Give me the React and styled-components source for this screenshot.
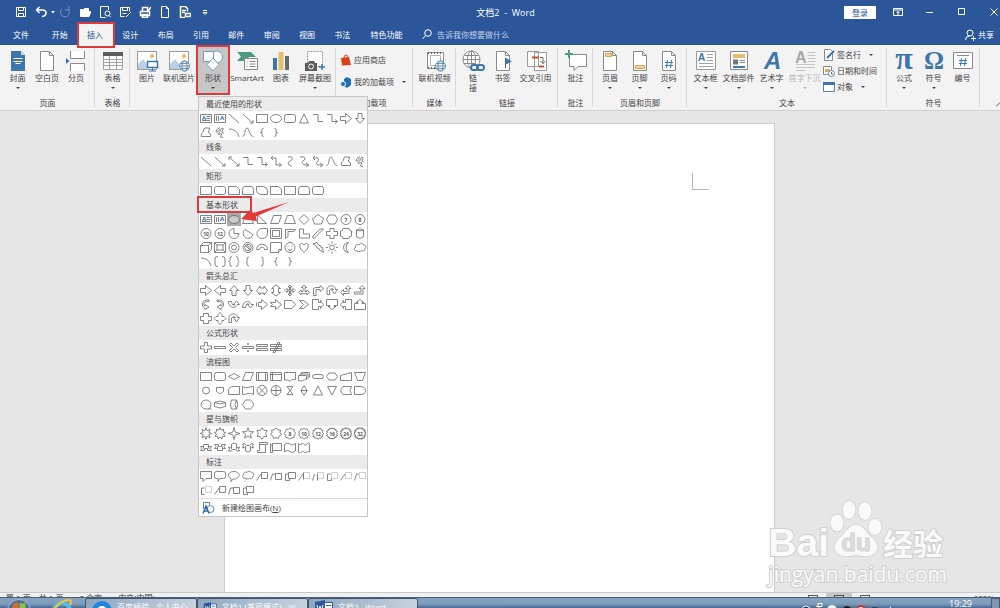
import React from 'react'
import styled, { createGlobalStyle, css } from 'styled-components'

const GlobalStyle = createGlobalStyle`
  * {
    box-sizing: border-box;
  }

  body {
    margin: 0;
    overflow: hidden;
    font-family: "Open Sans", "Noto Sans CJK SC", sans-serif;
    font-size: 8px;
    color: #444;
  }

  button, input {
    font: inherit;
    color: inherit;
    border: 0;
    padding: 0;
    margin: 0;
    background: none;
  }

  svg {
    display: block;
    fill: none;
  }
`

const Window = styled.div`
  height: 100vh;
  display: flex;
  flex-direction: column;
  overflow: hidden;
  background: #e6e6e6;
`

/* ---------- title bar ---------- */

const TitleBar = styled.header`
  display: grid;
  grid-template-columns: 1fr auto 1fr;
  align-items: center;
  height: 24px;
  padding-left: 11px;
  background: #2b579a;
  color: #fff;
`

const QuickAccess = styled.div`
  display: flex;
  align-items: center;
`

const QuickButton = styled.button`
  display: flex;
  justify-content: center;
  width: ${({ $narrow }) => ($narrow ? '4px' : '20px')};
  opacity: ${({ disabled }) => (disabled ? 0.35 : 1)};
`

const Title = styled.h1`
  margin: 0;
  font-size: 9px;
  font-weight: 400;
  white-space: pre;
`

const WindowControls = styled.div`
  display: flex;
  justify-content: flex-end;
  align-items: center;
  margin-right: -10px;
`

const LoginButton = styled.button`
  width: 32px;
  height: 13px;
  line-height: 13px;
  margin-right: 6px;
  background: #fff;
  color: #2b579a;
`

const ControlButton = styled.button`
  display: flex;
  justify-content: center;
  width: 32px;
`

/* ---------- tabs ---------- */

const TabBar = styled.nav`
  display: flex;
  align-items: stretch;
  height: 21px;
  background: #2b579a;
  color: #fff;
`

const TabGroup = styled.div`
  display: grid;
  grid-template-columns: repeat(9, 1fr);
  width: 318px;
`

const Tab = styled.button`
  position: relative;
  width: ${({ $width }) => $width || 'auto'};
  color: ${({ $active }) => ($active ? '#2b579a' : '#fff')};
  background: ${({ $active }) => ($active ? '#f3f3f3' : 'none')};
`

const RedFrame = styled.span`
  position: absolute;
  inset: ${({ $inset }) => $inset || '0'};
  border: 2px solid #dd3a3f;
  pointer-events: none;
  z-index: 6;
`

const TellMe = styled.label`
  display: flex;
  align-items: center;
  gap: 5px;
  margin-left: 9px;
`

const TellMeInput = styled.input`
  width: 90px;
  outline: 0;

  &::placeholder {
    color: #c5d3ea;
    opacity: 1;
  }
`

const Share = styled.button`
  display: flex;
  align-items: center;
  gap: 2px;
  margin-left: auto;
  padding-right: 6px;
`

/* ---------- ribbon ---------- */

const Ribbon = styled.section`
  display: flex;
  height: 66px;
  padding-top: 1px;
  background: #f3f3f3;
  border-bottom: 1px solid #cfcfcf;
`

const Group = styled.div`
  position: relative;
  display: flex;
  flex-direction: column;
  justify-content: space-between;
  flex: none;
  width: ${({ $width }) => $width}px;

  &::after {
    content: '';
    position: absolute;
    right: 0;
    top: 2px;
    bottom: 3px;
    width: 1px;
    background: #d8d8d8;
  }
`

const GroupItems = styled.div`
  display: flex;
  justify-content: ${({ $start }) => ($start ? 'flex-start' : 'center')};
  padding-left: ${({ $start }) => ($start ? '2px' : '0')};
`

const GroupLabel = styled.div`
  height: 14px;
  line-height: 14px;
  text-align: center;
`

const ItemWrap = styled.div`
  position: relative;
  flex: none;
  width: ${({ $width }) => $width}px;
`

const ItemButton = styled.button`
  display: flex;
  flex-direction: column;
  align-items: center;
  width: 100%;
  height: 49px;
  padding-top: 4px;
  white-space: pre;
  line-height: 10px;
  background: ${({ $pressed }) => ($pressed ? '#c6c6c6' : 'none')};
  color: ${({ disabled }) => (disabled ? '#b5b5b5' : '#444')};

  svg {
    flex: none;
    margin-bottom: 1px;
    overflow: visible;
  }
`

const Caret = styled.span`
  flex: none;
  width: 0;
  height: 0;
  margin: ${({ $inline }) => ($inline ? '0 0 0 6px' : '4px 0 0')};
  border: 2px solid transparent;
  border-top-color: currentColor;
  border-bottom: 0;
`

const SmallStack = styled.div`
  display: flex;
  flex-direction: column;
  gap: ${({ $gap }) => $gap}px;
  padding: ${({ $top }) => $top}px 0 0 2px;
`

const SmallButton = styled.button`
  display: flex;
  align-items: center;
  gap: 2px;
  height: 12px;
  line-height: 12px;
  white-space: nowrap;
`

const Collapse = styled.button`
  margin: auto 0 2px auto;
`

/* ---------- shapes menu ---------- */

const Menu = styled.div`
  position: absolute;
  top: 50px;
  left: 2px;
  width: 170px;
  background: #fff;
  border: 1px solid #c6c6c6;
  z-index: 5;
`

const MenuSection = styled.section`
  position: relative;
  padding-bottom: 1px;
`

const MenuHeading = styled.h2`
  position: relative;
  height: 14px;
  margin: 0;
  padding-left: 7px;
  line-height: 14px;
  font-size: 8px;
  font-weight: 400;
  background: #ebebeb;
`

const ShapeGrid = styled.div`
  display: grid;
  grid-template-columns: repeat(12, 1fr);
`

const ShapeCell = styled.button`
  display: flex;
  justify-content: center;
  height: 14px;
  ${({ $selected }) =>
    $selected &&
    css`
      background: #aaa;
    `}
`

const MenuFooter = styled.button`
  display: flex;
  align-items: center;
  gap: 7px;
  width: 100%;
  height: 18px;
  padding-left: 3px;
  border-top: 1px solid #dcdcdc;
`

const ArrowMark = styled.svg`
  position: absolute;
  left: 42px;
  top: 3px;
  pointer-events: none;
`

/* ---------- document ---------- */

const Workspace = styled.main`
  position: relative;
  flex: 1;
  min-height: 0;
  padding: 12px 225px 0 224px;
`

const Page = styled.article`
  height: 100%;
  background: #fff;
  border: 1px solid #cfcfcf;
  border-bottom: 0;
  padding: 49px 65px;
`

const MarginCorner = styled.div`
  width: 17px;
  height: 17px;
  margin-left: auto;
  border-left: 1px solid #b5b5b5;
  border-bottom: 1px solid #b5b5b5;
`

const Watermark = styled.div`
  position: absolute;
  right: 53px;
  bottom: 5px;
  color: #fafafa;
  -webkit-text-stroke: 2px #d0d0d0;
  paint-order: stroke fill;
`

const WatermarkLogo = styled.div`
  display: flex;
  align-items: flex-end;
  height: 58px;
  font: 700 39px/36px "Liberation Sans", sans-serif;

  svg {
    margin: 0 0 3px;
  }
`

const Du = styled.text`
  font: 700 24px "Liberation Sans", sans-serif;
  fill: #dcdcdc;
  stroke: #c8c8c8;
  stroke-width: 1px;
  -webkit-text-stroke: 0;
`

const WatermarkCjk = styled.span`
  font: 700 30px/38px "Noto Sans CJK SC", sans-serif;
`

const WatermarkUrl = styled.div`
  font: 400 21px/26px "Open Sans", sans-serif;
`

/* ---------- status bar and taskbar ---------- */

const StatusBar = styled.footer`
  display: flex;
  justify-content: space-between;
  flex: none;
  height: 5px;
  overflow: hidden;
  padding: 0 6px;
  line-height: 10px;
  white-space: pre;
  background: #f1f1f1;
  border-top: 1px solid #c8c8c8;
  color: #333;
`

const StatusSide = styled.div`
  display: flex;
  gap: ${({ $gap }) => $gap}px;
`

const ViewButton = styled.button`
  width: 26px;
  height: 12px;
  background: ${({ $active }) => ($active ? '#c6c6c6' : 'none')};

  &::before {
    content: '';
    display: block;
    width: 8px;
    height: 9px;
    margin: 2px auto 0;
    border: 1px solid #555;
  }
`

const Zoom = styled.span`
  margin-left: 96px;
`

const Taskbar = styled.footer`
  display: flex;
  flex: none;
  height: 11px;
  overflow: hidden;
  border-top: 1px solid #4b5f7a;
  background: linear-gradient(#88a2c0, #7c9aba 60%, #47698f);
  color: #fff;
`

const TaskLauncher = styled.button`
  display: flex;
  justify-content: center;
  width: ${({ $width }) => $width}px;
`

const TaskButton = styled.button`
  display: flex;
  flex: none;
  gap: 4px;
  width: ${({ $width }) => $width}px;
  height: 30px;
  padding: 1px 5px;
  overflow: hidden;
  line-height: 14px;
  white-space: nowrap;
  border: 1px solid #41566f;
  border-radius: 2px;
  background: linear-gradient(100deg, #8fa6bf, #c9d4e0);
`

const Tray = styled.div`
  display: flex;
  gap: 7px;
  margin-left: auto;
  padding-top: 2px;
`

const Clock = styled.time`
  margin: -2px 12px 0 16px;
  font-size: 9px;
  line-height: 12px;
`

const ShowDesktop = styled.button`
  width: 9px;
  height: 20px;
  margin-top: -2px;
  border: 1px solid #405a78;
  background: #8095ad;
`

/* ---------- shape drawings, all on a 14 x 14 grid ---------- */

const star = (n, outer, inner) => {
  const points = []
  for (let i = 0; i < n * 2; i++) {
    const r = i % 2 ? inner : outer
    const a = (Math.PI * i) / n - Math.PI / 2
    points.push(`${(7 + r * Math.cos(a)).toFixed(1)} ${(7.5 + r * Math.sin(a)).toFixed(1)}`)
  }
  return `M${points.join('L')}z`
}

const circle = (r, x = 7, y = 7.5) => `M${x - r} ${y}a${r} ${r} 0 1 0 ${2 * r} 0a${r} ${r} 0 1 0 ${-2 * r} 0z`

const RECT = 'M1.5 3.5h11v8h-11z'

const shapes = {
  textH: 'M1.5 3.5h11v8h-11zM7.5 5.5h4M7.5 7.5h4M3 9.5h8',
  textV: 'M1.5 3.5h11v8h-11zM3.5 5v5M5.5 5v5',
  line: 'M2 3l10 9',
  arrow: 'M2 3l9.5 9M12 9v3H9',
  arrow2: 'M2.5 3.5l9 8M12 9v3H9M2 6V3h3',
  rect: RECT,
  ellipse: 'M1.5 7.5a5.5 4 0 1 0 11 0a5.5 4 0 1 0 -11 0z',
  ellipseOn: 'M1.5 7.5a5.5 4 0 1 0 11 0a5.5 4 0 1 0 -11 0z',
  round: 'M3.5 3.5h7q2 0 2 2v4q0 2-2 2h-7q-2 0-2-2v-4q0-2 2-2z',
  triangle: 'M7 3l4.5 9h-9z',
  elbow: 'M2 3.5h5v7h5',
  elbowArrow: 'M2 3.5h5v7h5M10 8.5l2.5 2-2.5 2',
  elbowArrow2: 'M3 4h4v7h5M10 9l2.5 2-2.5 2M4 2l-2 2 2 2',
  curve: 'M5 3c6-1 5 3 2 4s-2 5 2 5',
  curveArrow: 'M3 3c7-1 5 3 3 4s-1 4 5 4M9 9l3 2-3 2',
  curveArrow2: 'M3 4c6-1 5 2 3 4s0 3 5 3M9 9l3 2-3 2M4 2L2 4l2 2',
  wave: 'M1.500 11.500C4.500 11.500 3.500 3 6 3s2 8.500 6.500 8.500',
  freeform: 'M2.500 11.500h9q1-3-1.500-3.500-1.500-1 0-2.500l.5-2.500H5.500L4.500 5q1 1.500-1 2.500t-1 4z',
  scribble: 'M7 2.500q-4 2-4 4t4-2q2 0-1 3t2 1q2 0 0 2t2 2M8 3.500q3-1 2 1T9 7t2 1',
  arc: 'M2 4c5 0 9 3 10 8',
  braceL: 'M8.500 3.500q-2 0-1.500 2t-1.500 2q2 0 1.500 2t1.500 2',
  braceR: 'M5.500 3.500q2 0 1.500 2t1.500 2q-2 0-1.500 2t-1.500 2',
  arrowR: 'M1.500 5.500h5v-3l6 5-6 5v-3h-5z',
  arrowL: 'M12.500 5.500h-5v-3l-6 5 6 5v-3h5z',
  arrowU: 'M5 12.500v-5H2.500L7 2.500l4.500 5H9v5z',
  arrowD: 'M5 2.500v5H2.500L7 12.500l4.500-5H9v-5z',
  snip1: 'M1.500 3.500h8l3 3v5h-11z',
  snipDiag: 'M1.500 3.500h7q4 1 4 4v4h-7q-4-1-4-4z',
  round2: 'M4 3.500h6q2.500 0 2.500 3v5h-11v-5q0-3 2.500-3z',
  parallelogram: 'M4.500 3.500h8l-3 8h-8z',
  trapezoid: 'M4.500 3.500h5l3 8h-11z',
  rtTriangle: 'M2.500 3v8.500h9z',
  diamond: 'M7 2.500l5 5-5 5-5-5z',
  pentagon: 'M7 2.500l5.500 4-2 5.500h-7l-2-5.500z',
  hexagon: 'M4 3h6l2.500 4.500L10 12H4L1.500 7.500z',
  circle: circle(5),
  pie: 'M7 2.500a5 5 0 1 0 5 5H7z',
  chord: 'M4 3.500a5 5 0 1 0 8 5z',
  tear: 'M12.500 2.500v5a5.300 5 0 1 1-5.300-5z',
  frame: 'M1.500 2.500h11v10h-11zM3.500 4.500h7v6h-7z',
  halfFrame: 'M2.500 3.500h10l-1.500 2H5v5l-2.500 2z',
  lShape: 'M2.500 3h4v5h6v4h-10z',
  stripe: 'M2 12V10l7-7h3.500L3.500 12z',
  plus: 'M5 2.500h4v3h3.500v4H9v3H5v-3H1.500v-4H5z',
  plaque: 'M4 2.500h6q0 2.500 2.500 2.500v5q-2.500 0-2.500 2.500H4q0-2.500-2.500-2.500V5q2.500 0 2.500-2.500z',
  can: 'M3.500 4v7q3.500 2.500 7 0V4q-3.500-2.500-7 0 3.500 2 7 0',
  cube: 'M1.500 5.500h8v7h-8zM1.500 5.500l3-3h8v7l-3 3M9.500 5.500l3-3',
  bevel: 'M1.500 2.500h11v10h-11zM4 5h6v5H4zM1.500 2.500L4 5M12.500 2.500L10 5M1.500 12.500L4 10M12.500 12.500L10 10',
  donut: circle(5) + circle(2.5),
  noSign: circle(5) + circle(3.2) + 'M4.500 5.500l4.500 4.500M5.500 4.500l4 4.500',
  blockArc: 'M1.500 9.500c0-7 11-7 11 0h-3c0-3-5-3-5 0z',
  fold: 'M1.500 2.500h11v7l-3 3h-8zM9.500 12.500v-3h3',
  smiley: circle(5) + 'M4.500 9q2.500 3 5 0M5 5.500v1M9 5.500v1',
  heart: 'M7 12.500C-1 6 4 .5 7 5c3-4.500 8 1 0 7.500z',
  bolt: 'M2 4l4-1.500 2 3 1-.5 1.500 3 1-.5 1 5-4.500-3 .5-.5-3-1.500 .5-1z',
  sun: circle(2.3) + 'M7 1.500v2M7 11.500v2M1 7.500h2M11 7.500h2M3 3.500l1.500 1.500M9.500 10l1.500 1.500M11 3.500L9.500 5M4.500 10L3 11.500',
  moon: 'M9.500 2.500a5 5 0 1 0 0 10q-5-5 0-10z',
  cloud: 'M4 11c-3 0-3.500-3-1.500-3.500C2 4.500 5 4 6 5c1-2 4-2 4.500 0 3 0 2.500 3 1.500 3.500 0 3-3 2.500-3.500 2-1 1.500-3.500 1-4.500.5z',
  brackets: 'M5 2.500q-3 0-3 2v6q0 2 3 2M9 2.500q3 0 3 2v6q0 2-3 2',
  braces: 'M5 2.500q-2 0-2 2v2l-1 1 1 1v2q0 2 2 2M9 2.500q2 0 2 2v2l1 1-1 1v2q0 2-2 2',
  bracketL: 'M8 3q-2 0-2 2v5q0 2 2 2',
  bracketR: 'M6 3q2 0 2 2v5q0 2-2 2',
  arrowLR: 'M1.500 7.500l3.500-4.500v2h4v-2l3.500 4.500-3.500 4.500v-2H5v2z',
  arrowUD: 'M7 2l4.500 3.500h-2v4h2L7 13 2.500 9.500h2v-4h-2z',
  arrow4: 'M7 2l2 2H7.500v3H10V5.500l2 2-2 2V8H7.500v3H9l-2 2-2-2h1.500V8H4v1.500l-2-2 2-2V7h2.500V4H5z',
  arrow3: 'M7 2l2.500 2.500H8v4h2V7l2.500 2.500L10 12v-1.500H4V12L1.500 9.500 4 7v1.500h2v-4H4.500z',
  bent: 'M2.500 12.500v-6q0-2 2-2H9v-2L12.500 5.500 9 8.500v-2H5v6z',
  uTurn: 'M2 11.500V7c0-5.500 8.500-5.500 8.500-.5h2L9.500 11 6.500 6.500h2q-2-2.500-4 .5v4.500z',
  leftUp: 'M1.500 9.500l3-3V8.500H8V5.500H6l3-3 3 3h-2v5H4.500v2z',
  bentUp: 'M1.500 9H8V5.500H6l3-3 3 3h-2v5.500H1.500z',
  curvedR: 'M10 3C2 2 2 10 6 11v1.500l4-2.500-4-2.500V9C3.500 7 5 4 10 4.500z',
  curvedL: 'M4 3c8-1 8 7 4 8v1.500L4 10l4-2.500V9c2.500-2 1-5-4-4.500z',
  curvedU: 'M1.500 4.500c0 7 8 7.500 8.500 3h2.500L9.500 4 6.500 7.500H8Q5.500 10 4.500 4.500z',
  curvedD: 'M1.500 10.500c0-7 8-7.500 8.500-3h2.500L9.500 11 6.500 7.500H8Q5.500 5 4.500 10.500z',
  stripedR: 'M1.500 5.500v4M3.500 5.500h3v-3l6 5-6 5v-3h-3z',
  notchedR: 'M1.500 5.500h5v-3l6 5-6 5v-3h-5l2-2z',
  homePlate: 'M1.500 3.500h7.500l3.500 4-3.500 4H1.500z',
  chevron: 'M2.500 3.500h4l5 4-5 4h-4l4-4z',
  callR: 'M1.500 2.500h6v3h2v-2l3 4-3 4v-2h-2v3h-6z',
  callD: 'M1.500 2.500h11v6H9v1h2l-4 3-4-3h2v-1H1.500z',
  callL: 'M12.500 2.500h-6v3h-2v-2l-3 4 3 4v-2h2v3h6z',
  callU: 'M1.500 12.500h11v-6H9v-1h2l-4-3-4 3h2v1H1.500z',
  callLR: 'M4.500 2.500h5v3h3v4h-3v3h-5v-3h-3v-4h3z',
  call4: 'M7 1.500l2 2v2h2l2 2-2 2H9v2l-2 2-2-2v-2H3l-2-2 2-2h2v-2z',
  mPlus: 'M5.500 2.500h3v3.500h4v3h-4v3.500h-3V9h-4V6h4z',
  minus: 'M1.500 6.500h11v2h-11z',
  times: 'M4 3l3 3 3-3 1.500 1.500L8.500 7.500l3 3L10 12 7 9l-3 3-1.500-1.500 3-3-3-3z',
  divide: 'M1.500 6.500h11v2h-11zM6.500 3.500h1v1h-1zM6.500 10.500h1v1h-1z',
  equal: 'M1.500 4.500h11v2h-11zM1.500 8.500h11v2h-11z',
  notEqual: 'M1.500 4.500h11v2h-11zM1.500 8.500h11v2h-11zM4 12.500l5-10h2l-5 10z',
  decision: 'M7 4.500l5.500 3-5.500 3-5.500-3z',
  predefined: 'M1.500 3.500h11v8h-11zM3.500 3.500v8M10.500 3.500v8',
  internal: 'M1.500 3.500h11v8h-11zM3.500 3.500v8M1.500 5.500h11',
  doc: 'M1.500 3.500h11v7H9l-2 2-2-1.500H1.500z',
  multiDoc: 'M1.500 6.500h8v4q-2 0-4 1t-4 0zM3 6.500v-1.500h8v5M4.500 5v-1.500h8v5',
  terminator: 'M4 5.500h6q2.500 0 2.500 2t-2.500 2H4q-2.500 0-2.500-2t2.500-2z',
  prep: 'M4 4h6l2.500 3.500L10 11H4L1.500 7.500z',
  manualIn: 'M1.500 6.500l11-3v8h-11z',
  manualOp: 'M1.500 3.500h11l-3 8h-5z',
  connector: circle(3.5),
  offpage: 'M3.500 4.500h7v4l-3.500 2.500-3.500-2.500z',
  card: 'M4.500 3.500h8v8h-11V6z',
  tape: 'M1.500 3.500q3 2 5.500 1t5.500-1v8q-3-2-5.500-1t-5.500 1z',
  sumJ: circle(5) + 'M3.500 4l7 7M10.500 4l-7 7',
  orJ: circle(5) + 'M7 2.500v10M2 7.500h10',
  collate: 'M4 3.500h6l-6 8h6z',
  sort: 'M7 2.500l3 5-3 5-3-5zM4 7.500h6',
  merge: 'M7 12L2.500 3.500h9z',
  stored: 'M4 3.500h8.500q-3 4 0 8H4q-4.500-4 0-8z',
  delay: 'M1.500 3.500H7q5.500 0 5.500 4T7 11.500H1.500z',
  seqTape: 'M7 12h5.500M7 12a5 4.500 0 1 1 5-4.500q0 3-2.500 4.500',
  disk: 'M1.500 5.500v4q5.500 3 11 0v-4q-5.500-3-11 0 5.500 3 11 0',
  drum: 'M4.500 3q-2.500 4.500 0 9h5q2.500-4.500 0-9zM9.500 3q-3 4.500 0 9',
  display: 'M1.500 7.500l3-4.500h5q3 2 3 4.500t-3 4.500h-5z',
  burst1: star(8, 5.8, 3),
  burst2: star(9, 5.8, 3.6),
  star4: star(4, 6, 1.8),
  star5: star(5, 5.8, 2.4),
  star6: star(6, 5.8, 3.6),
  star7: star(7, 5.6, 4),
  star8: star(8, 5.6, 4.8),
  star10: star(10, 5.6, 4.6),
  star12: star(12, 5.8, 4.6),
  star16: star(16, 5.8, 4.6),
  star24: star(20, 5.9, 4.7),
  star32: star(24, 6, 4.8),
  ribbonU: 'M1.500 10.500l1.500-2-1.500-2h3v-2h5v2h3l-1.500 2 1.500 2h-4v-2h-3v2zM4.500 6.500v2M9.500 6.500v2',
  ribbonD: 'M1.500 4.500h4v2h3v-2h4l-1.500 2 1.500 2h-3v2h-5v-2h-3l1.500-2zM4.500 6.500v2M9.500 6.500v2',
  curvRibU: 'M1.500 11l1-2-1-2q2 1 3 0V4q2.500-2 5 0v3q1 1 3 0l-1 2 1 2q-3 1-4-1.500h-3Q4.500 12 1.500 11zM4.500 7v2M9.500 7v2',
  curvRibD: 'M1.500 4l1 2-1 2q2-1 3 0v3q2.500 2 5 0V8q1-1 3 0l-1-2 1-2q-3-1-4 1.500h-3Q4.500 3 1.500 4zM4.500 6v2M9.500 6v2',
  scrollV: 'M4.500 2.500h8v2h-2v8h-8v-2h2zM4.500 4.500h6',
  scrollH: 'M1.500 3.500v9h2v-2h9v-7h-9v1.500h-2M3.500 5v5.500',
  waveS: 'M1.500 4.500q3-3 5.500-.5t5.500-.5v7.500q-3 3-5.500.5t-5.500.5z',
  dblWave: 'M1.500 3.500q1.500 2 3 .5t2.500.5 3-.5 2.500 0v8q-1-1.500-2.500 0t-3 0-2.500 0-3 .5z',
  cRect: 'M1.500 2.500h11v7H7l-3 3v-3H1.500z',
  cRound: 'M3.500 2.500h7q2 0 2 2v3q0 2-2 2H7l-2 3v-3H3.500q-2 0-2-2v-3q0-2 2-2z',
  cOval: 'M4 12.500v-3C-1 7 2 2.500 7 2.500s7.500 5 2.500 7q-2 1-3.500.5z',
  cCloud: 'M3 12.500h.5M4.500 11h1M4 9c-3 0-3-2.500-1.500-3C2 3 5 2.500 6 3.500c1-2 4-1 4.500 0 3 0 2.500 3 1.500 3.500 0 3-3 3-3.500 2-1 1.500-3.500 1-4.500 0z',
  cLine1: 'M6.500 3.500h6v6h-6zM1.500 11.500L6 5',
  cLine2: 'M6.500 4.500h6v6h-6zM1.500 11.500l2-6.500H6',
  cLine3: 'M5.500 3.500h7v6h-7zM5.500 5h-3v6.500h4v-2',
  cLine4: 'M6.500 3.500h6v6h-6z',
}

const glyphText = {
  circle7: ['circle', '7'],
  circle8: ['circle', '8'],
  circle10: ['circle', '10'],
  circle12: ['circle', '12'],
  s8: ['star8', '8'],
  s10: ['star10', '10'],
  s12: ['star12', '12'],
  s16: ['star16', '16'],
  s24: ['star24', '24'],
  s32: ['star32', '32'],
}

// Faint callouts have no visible border; only the leader line is dark.
const faintLeader = {
  f1: 'M1.500 11.500L6 5M6.500 3.500v7',
  f2: 'M1.500 11.500l2-6.500M6.500 4.500v7',
  f3: 'M5.500 5h-3v6.500h4v-2',
  g1: 'M1.500 11.500L6 5',
  g2: 'M1.500 11.500l2-6.500H6',
  g3: 'M5.500 5h-3v6.500h3',
}

const ShapeIcon = ({ name }) => {
  const [base, label] = glyphText[name] || [name]
  return (
    <svg width="14" height="14" viewBox="0 0 14 14" stroke="#666" strokeWidth="0.8">
      {faintLeader[name] ? (
        <>
          <path d={shapes.cLine4} stroke="#c4c4c4" />
          <path d={faintLeader[name]} />
        </>
      ) : (
        <path d={shapes[base]} fill={name === 'ellipseOn' ? '#c9c9c9' : 'none'} />
      )}
      {label && (
        <text x="7" y="9.500" fontSize="5" fontWeight="700" textAnchor="middle" fill="#555" stroke="none">
          {label}
        </text>
      )}
      {(name === 'textH' || name === 'textV') && (
        <text x={name === 'textH' ? 3 : 7} y="8.500" fontSize="6" fontWeight="700" fill="#2f6ea8" stroke="none">
          A
        </text>
      )}
    </svg>
  )
}

const sections = [
  {
    title: '最近使用的形状',
    items:
      'textH textV line arrow rect ellipse round triangle elbow elbowArrow arrowR arrowD freeform scribble arc wave braceL braceR',
  },
  {
    title: '线条',
    items: 'line arrow arrow2 elbow elbowArrow elbowArrow2 curve curveArrow curveArrow2 wave freeform scribble',
  },
  { title: '矩形', items: 'rect round snip1 round2 snipDiag snip1 rect round2 round' },
  {
    title: '基本形状',
    marked: true,
    items:
      'textH textV ellipseOn trapezoid rtTriangle parallelogram trapezoid diamond pentagon hexagon circle7 circle8 circle10 circle12 pie chord tear frame halfFrame lShape stripe plus plaque can cube bevel donut noSign blockArc fold smiley heart bolt sun moon cloud arc brackets braces bracketL bracketR braceL braceR',
  },
  {
    title: '箭头总汇',
    items:
      'arrowR arrowL arrowU arrowD arrowLR arrowUD arrow4 arrow3 bent uTurn leftUp bentUp curvedR curvedL curvedU curvedD stripedR notchedR homePlate chevron callR callD callL callU callLR call4 uTurn',
  },
  { title: '公式形状', items: 'mPlus minus times divide equal notEqual' },
  {
    title: '流程图',
    items:
      'rect round decision parallelogram predefined internal doc multiDoc terminator prep manualIn manualOp connector offpage card tape sumJ orJ collate sort triangle merge stored delay seqTape disk drum display',
  },
  {
    title: '星与旗帜',
    items: 'burst1 burst2 star4 star5 star6 star7 s8 s10 s12 s16 s24 s32 ribbonU ribbonD curvRibU curvRibD scrollV scrollH waveS dblWave',
  },
  { title: '标注', items: 'cRect cRound cOval cCloud cLine1 cLine2 cLine3 f1 f2 f3 g1 g2 g3 cLine1 cLine2 cLine3' },
]

/* ---------- ribbon drawings, 24 x 22 ---------- */

const PAGE = 'M5.500 1.500h9l4 4v15h-13zM14.500 1.500v4h4'

const globe = (x, y, r) => (
  <g stroke="#5b87b0" strokeWidth="0.9" fill="#f3f3f3">
    <circle cx={x} cy={y} r={r} />
    <ellipse cx={x} cy={y} rx={r / 2} ry={r} fill="none" />
    <path d={`M${x - r} ${y}h${2 * r}M${x - r * 0.85} ${y - r / 2}h${r * 1.7}M${x - r * 0.85} ${y + r / 2}h${r * 1.7}`} />
  </g>
)

const picture = (
  <>
    <path d="M2.500 1.500h19v18h-19z" fill="#fff" stroke="#9a9a9a" />
    <path d="M3 19v-5l5-5 4 5v5z" fill="#b9d0e6" />
    <circle cx="17" cy="6" r="2" fill="#e8b95b" />
  </>
)

const ribbonIcons = {
  cover: (
    <>
      <path d="M5 1h10l4 4v16H5z" fill="#3b76ad" />
      <path d="M15 1v4h4z" fill="#c8dbec" />
      <path d="M7.500 8.500h9M7.500 11.500h9M9.500 13.500h5" stroke="#fff" />
    </>
  ),
  blank: <path d={PAGE} fill="#fff" stroke="#8a8a8a" />,
  pageBreak: (
    <>
      <path d="M6.500 1v7.500h14V1M6.500 21v-7.500h14V21" fill="#fff" stroke="#8a8a8a" />
      <path d="M2 8v6l3.500-3z" fill="#3b76ad" />
    </>
  ),
  table: (
    <>
      <path d="M2.500 2.500h19v17h-19zM2.500 9.500h19M2.500 12.500h19M2.500 15.500h19M8.500 5v15M15.500 5v15" fill="#fff" stroke="#a3a3a3" />
      <path d="M2 2h20v4H2z" fill="#5c5c5c" />
    </>
  ),
  picture: (
    <>
      {picture}
      <path d="M12.500 11.500h10v6h-10z" fill="#fff" stroke="#3b76ad" strokeWidth="1.5" />
      <path d="M17.500 18v3M14 21h7" stroke="#3b76ad" />
    </>
  ),
  online: (
    <>
      {picture}
      {globe(17.5, 16, 5)}
    </>
  ),
  shapes: (
    <g fill="#fff" stroke="#6f9cc4">
      <circle cx="15.500" cy="7" r="6" />
      <path d="M2.500 1.500h10v10h-10z" />
      <path d="M12 8l6 6.500-6 6.500-6-6.500z" />
    </g>
  ),
  smartArt: (
    <>
      <path d="M2 2h14l5 5h-7l-3 4H2l4-4.500z" fill="#4b9b7c" />
      <path d="M9.500 8.500h13v11h-13z" fill="#fff" stroke="#8a8a8a" />
      <path d="M11.500 11.500h1M14.500 11.500h6M11.500 14h1M14.500 14h6M11.500 16.500h1M14.500 16.500h6" stroke="#8a8a8a" />
    </>
  ),
  chart: (
    <>
      <path d="M4 8h4v12H4z" fill="#3b76ad" />
      <path d="M9.500 2h5v18h-5z" fill="#e5be6b" />
      <path d="M16 6h4v14h-4z" fill="#6a6a6a" />
    </>
  ),
  screenshot: (
    <>
      <path d="M4.500 1.500h15v15h-15z" fill="#fff" stroke="#9a9a9a" strokeDasharray="2 1" />
      <path d="M2 13h3l1-2h5l1 2h2v8H2z" fill="#5c5c5c" />
      <circle cx="8" cy="16.500" r="2.500" stroke="#fff" fill="#5c5c5c" />
      <path d="M19 14v6M16 17h6" stroke="#3b76ad" strokeWidth="1.5" />
    </>
  ),
  video: (
    <>
      <path d="M4.500 2.500h16v16h-16z" fill="#fff" stroke="#8a8a8a" />
      <path d="M5 3h15M5 18h15" stroke="#666" strokeWidth="2" strokeDasharray="1 2" />
      <path d="M7.500 5.500h10v10h-10z" stroke="#b0b0b0" />
      {globe(17.5, 16, 5)}
    </>
  ),
  link: (
    <>
      <g stroke="#8a8a8a" fill="#fff">
        <circle cx="10.500" cy="9.500" r="8.500" />
        <ellipse cx="10.500" cy="9.500" rx="4" ry="8.500" />
        <path d="M2 9.500h17M3 5.500h15M3 13.500h12M10.500 1v17" />
      </g>
      <g stroke="#3b76ad" strokeWidth="2">
        <rect x="10" y="15" width="7" height="5" rx="2.500" fill="#f3f3f3" />
        <rect x="16" y="15" width="7" height="5" rx="2.500" />
      </g>
    </>
  ),
  bookmark: (
    <>
      <path d={PAGE} fill="#fff" stroke="#8a8a8a" />
      <path d="M14.500 8v10" stroke="#666" />
      <path d="M15 8l6 3.500-6 3z" fill="#3b76ad" />
    </>
  ),
  crossRef: (
    <>
      <path d="M3.500 1.500h11v15h-11zM10.500 2.500h12v18h-12z" fill="#fff" stroke="#9a9a9a" />
      <path d="M8 7.500h7M15 16.500h5" stroke="#c3502f" strokeWidth="2" />
      <path d="M16 7.500h3v6M16.500 11l2.500 2.500 2.500-2.500" stroke="#666" />
    </>
  ),
  comment: (
    <>
      <path d="M5.500 4.500h17v12H14l-4 4v-4H5.500z" fill="#fff" stroke="#8a8a8a" />
      <path d="M5 0v8M1 4h8" stroke="#4b9b7c" strokeWidth="2" />
    </>
  ),
  header: (
    <>
      <path d={PAGE} fill="#fff" stroke="#8a8a8a" />
      <path d="M7.500 3.500h6v3h-6z" fill="#f0cf8b" stroke="#d2ab5e" />
    </>
  ),
  footer: (
    <>
      <path d={PAGE} fill="#fff" stroke="#8a8a8a" />
      <path d="M7.500 15.500h9v3h-9z" fill="#f0cf8b" stroke="#d2ab5e" />
    </>
  ),
  pageNumber: (
    <>
      <path d={PAGE} fill="#fff" stroke="#8a8a8a" />
      <path d="M10.500 10l-1 8M14.500 10l-1 8M8 12.500h8M8 15.500h8" stroke="#3b76ad" />
    </>
  ),
  textBox: (
    <>
      <path d="M2.500 1.500h19v18h-19z" fill="#fff" stroke="#9a9a9a" />
      <path d="M13 4.500h6M13 7.500h6M13 10.500h6M5 13.500h14M5 16.500h14" stroke="#a3a3a3" />
      <text x="4" y="10.500" fontSize="10" fontWeight="700" fill="#3b76ad" fontFamily="Liberation Sans">A</text>
    </>
  ),
  parts: (
    <>
      <path d="M3.500 1.500h17v18h-17z" fill="#fff" stroke="#8a8a8a" />
      <path d="M6 4h12v4H6z" fill="#e5be6b" />
      <path d="M6 9.500h5v5H6z" fill="#777" />
      <path d="M12.500 10.500H18M12.500 12.500H18" stroke="#8a8a8a" />
      <path d="M6 16h12v2H6z" fill="#3b76ad" />
    </>
  ),
  wordArt: (
    <text x="4" y="19" fontSize="24" fontWeight="700" fontStyle="italic" fill="#3b76ad" fontFamily="Liberation Sans">A</text>
  ),
  dropCap: (
    <>
      <text x="2" y="13" fontSize="16" fontWeight="700" fill="#a8a8a8" fontFamily="Liberation Sans">A</text>
      <path d="M14.500 2.500h8M14.500 5.500h8M14.500 8.500h8M14.500 11.500h8M3 14.500h19M3 17.500h19M3 20.500h10" stroke="#c4c4c4" />
    </>
  ),
  pi: (
    <text x="12" y="19" fontSize="32" textAnchor="middle" fontWeight="700" fill="#3b76ad" fontFamily="Liberation Serif">π</text>
  ),
  omega: (
    <text x="12" y="19" fontSize="25" textAnchor="middle" fontWeight="700" fill="#3b76ad" fontFamily="Liberation Serif">Ω</text>
  ),
  number: (
    <>
      <path d="M2.500 2.500h19v16h-19z" fill="#fff" stroke="#8a8a8a" />
      <path d="M6 5.500h12" stroke="#8a8a8a" />
      <path d="M10.500 8l-1 8M14.500 8l-1 8M8 10.500h8M8 13.500h8" stroke="#3b76ad" />
    </>
  ),
}

const Item = ({ icon, label, width, caret, disabled, pressed, children }) => (
  <ItemWrap $width={width}>
    <ItemButton disabled={disabled} $pressed={pressed}>
      <svg width="24" height="22" viewBox="0 0 24 22">{ribbonIcons[icon]}</svg>
      {label}
      {caret && <Caret />}
    </ItemButton>
    {children}
  </ItemWrap>
)

const ShapesMenu = () => (
  <Menu>
    {sections.map((section) => (
      <MenuSection key={section.title}>
        <MenuHeading>
          {section.title}
          {section.marked && <RedFrame $inset="-2px 115px -1px -2px" />}
        </MenuHeading>
        <ShapeGrid>
          {section.items.split(' ').map((name, index) => (
            <ShapeCell key={index} aria-label={name} $selected={name === 'ellipseOn'}>
              <ShapeIcon name={name} />
            </ShapeCell>
          ))}
        </ShapeGrid>
        {section.marked && (
          <ArrowMark width="50" height="22" viewBox="0 0 50 22">
            <path d="M0 18L10 8l2 4L48 1 15 15.500l1 4.500z" fill="#e5383b" />
          </ArrowMark>
        )}
      </MenuSection>
    ))}
    <MenuFooter>
      <svg width="13" height="13" viewBox="0 0 13 13">
        <path d="M1.500 1.500h6v6h-6z" stroke="#5b87b0" fill="#fff" />
        <circle cx="8.500" cy="8" r="3.500" stroke="#5b87b0" fill="#fff" />
        <path d="M1 12.500L4 5l3 7.500M2 10h4" stroke="#2f6ea8" strokeWidth="1.5" />
      </svg>
      <span>
        新建绘图画布(<u>N</u>)
      </span>
    </MenuFooter>
  </Menu>
)

const quickIcons = [
  { name: '保存', d: 'M1.500 1.500h9v9h-9zM3.500 1.500v3h5v-3M3.500 10.500v-3h5v3' },
  { name: '撤消', d: 'M4.500 1L1.500 4l3 3M2 4h5q4 0 4 3t-4 3.500', bold: true },
  { name: '撤消选项', caret: true },
  { name: '恢复', d: 'M3 3a4.500 4.500 0 1 0 6 0M6 4h4V0', disabled: true },
  { name: '打开', d: 'M1.500 10V3.500h3l1-1h4V5M1.500 10.500L3.500 5.500h8.500l-2 5z', fill: true },
  { name: '预览', d: 'M9.500 4V.5h-8v11h5M6 7.500a2.500 2.500 0 1 0 5 0a2.500 2.500 0 1 0-5 0M10 9.500l2 2' },
  { name: '另存为', d: 'M1.500 1.500h9v4M1.500 1.500v9h4M3.500 1.500v3h5v-3M3.500 7.500h4M7 11l5-5' },
  { name: '快速打印', d: 'M1.500 5.500h9v4h-9zM3.500 5V1.500h5V5M3.500 8.500h5v3h-5zM8 3l1.500 1.500L12 1', bold: true },
  { name: '新建', d: 'M2.500 .5h5l2 2v9h-7zM7.500 .5v2h2' },
  { name: '检查', d: 'M6 11.500H1.500V.5h5l2 2v3M3 4.500h4M3 6.500h3M6.500 7.500h5v3h-5z', bold: true },
  { name: '自定义', d: 'M4 4.500h4M4 6.500h4L6 8.500z' },
]

const tabs = ['开始', '插入', '设计', '布局', '引用', '邮件', '审阅', '视图', '书法']

const WordMark = () => (
  <svg width="20" height="16" viewBox="0 0 20 16">
    <path d="M9.500 2.500h9v14h-9z" fill="#fff" stroke="#2b579a" />
    <path d="M12 5.500h5M12 8.500h5" stroke="#2b579a" />
    <path d="M1 2l10-2v16H1z" fill="#2b579a" />
    <path d="M3 5l1.500 6L6 6l1.500 5L9 5" stroke="#fff" />
  </svg>
)

const App = () => (
  <>
    <GlobalStyle />
    <Window>
      <TitleBar>
        <QuickAccess>
          {quickIcons.map((icon) => (
            <QuickButton key={icon.name} aria-label={icon.name} $narrow={icon.caret} disabled={icon.disabled}>
              {icon.caret ? (
                <svg width="4" height="3" viewBox="0 0 4 3">
                  <path d="M0 0h4L2 2.500z" fill="#fff" />
                </svg>
              ) : (
                <svg width="12" height="12" viewBox="0 0 12 12" stroke="#fff" strokeWidth={icon.bold ? 1.5 : 1}>
                  <path d={icon.d} fill={icon.fill ? '#fff' : 'none'} />
                </svg>
              )}
            </QuickButton>
          ))}
        </QuickAccess>
        <Title>文档2  -  Word</Title>
        <WindowControls>
          <LoginButton>登录</LoginButton>
          <ControlButton aria-label="功能区显示选项">
            <svg width="10" height="8" viewBox="0 0 10 8" stroke="#fff">
              <path d="M.5 .5h9v7h-9zM.5 2h9M5 7V3.500M3.500 5L5 3.500 6.500 5" />
            </svg>
          </ControlButton>
          <ControlButton aria-label="最小化">
            <svg width="8" height="8" viewBox="0 0 8 8" stroke="#fff"><path d="M0 4.500h7" /></svg>
          </ControlButton>
          <ControlButton aria-label="最大化">
            <svg width="8" height="8" viewBox="0 0 8 8" stroke="#fff"><path d="M.5 .5h6v6h-6z" /></svg>
          </ControlButton>
          <ControlButton aria-label="关闭">
            <svg width="8" height="8" viewBox="0 0 8 8" stroke="#fff"><path d="M.5 .5l7 7M7.500 .5l-7 7" /></svg>
          </ControlButton>
        </WindowControls>
      </TitleBar>

      <TabBar>
        <Tab $width="42px">文件</Tab>
        <TabGroup>
          {tabs.map((tab) => (
            <Tab key={tab} $active={tab === '插入'}>
              {tab}
              {tab === '插入' && <RedFrame $inset="-2px -2px -3px 0" />}
            </Tab>
          ))}
        </TabGroup>
        <Tab $width="53px">特色功能</Tab>
        <TellMe>
          <svg width="10" height="11" viewBox="0 0 10 11" stroke="#fff">
            <circle cx="6" cy="4" r="3.300" />
            <path d="M3.500 6.500L.5 10" />
          </svg>
          <TellMeInput placeholder="告诉我你想要做什么" aria-label="告诉我你想要做什么" />
        </TellMe>
        <Share>
          <svg width="11" height="12" viewBox="0 0 11 12" stroke="#fff">
            <circle cx="5" cy="4" r="3" />
            <path d="M.5 11q0-4 4-4M6 9.500h5M8.500 7v5" />
          </svg>
          共享
        </Share>
      </TabBar>

      <Ribbon>
        <Group $width={95}>
          <GroupItems $start>
            <Item icon="cover" label="封面" width={31} caret />
            <Item icon="blank" label="空白页" width={28} />
            <Item icon="pageBreak" label="分页" width={30} />
          </GroupItems>
          <GroupLabel>页面</GroupLabel>
        </Group>
        <Group $width={35}>
          <GroupItems>
            <Item icon="table" label="表格" width={30} caret />
          </GroupItems>
          <GroupLabel>表格</GroupLabel>
        </Group>
        <Group $width={206}>
          <GroupItems $start>
            <Item icon="picture" label="图片" width={30} />
            <Item icon="online" label="联机图片" width={34} />
            <Item icon="shapes" label="形状" width={34} caret pressed>
              <RedFrame $inset="-1px 0 0" />
              <ShapesMenu />
            </Item>
            <Item icon="smartArt" label="SmartArt" width={34} />
            <Item icon="chart" label="图表" width={34} />
            <Item icon="screenshot" label="屏幕截图" width={34} caret />
          </GroupItems>
        </Group>
        <Group $width={77}>
          <GroupItems $start>
            <SmallStack $gap={10} $top={8}>
              <SmallButton>
                <svg width="12" height="12" viewBox="0 0 12 12">
                  <path d="M1 4l8-1 2 8-9 .5z" fill="#dc3e15" />
                  <path d="M4 4q0-3 2-3t2 2.500" stroke="#dc3e15" />
                </svg>
                应用商店
              </SmallButton>
              <SmallButton>
                <svg width="12" height="12" viewBox="0 0 12 12">
                  <path d="M4 3l3-2 4 2v6l-4 3-3-2z" fill="#1e6fb5" />
                  <circle cx="3" cy="8" r="2.500" fill="#1e6fb5" stroke="#f3f3f3" />
                </svg>
                我的加载项
                <Caret $inline />
              </SmallButton>
            </SmallStack>
          </GroupItems>
          <GroupLabel>加载项</GroupLabel>
        </Group>
        <Group $width={43}>
          <GroupItems>
            <Item icon="video" label="联机视频" width={38} />
          </GroupItems>
          <GroupLabel>媒体</GroupLabel>
        </Group>
        <Group $width={102}>
          <GroupItems $start>
            <Item icon="link" label={'链\n接'} width={30} />
            <Item icon="bookmark" label="书签" width={29} />
            <Item icon="crossRef" label="交叉引用" width={37} />
          </GroupItems>
          <GroupLabel>链接</GroupLabel>
        </Group>
        <Group $width={35}>
          <GroupItems>
            <Item icon="comment" label="批注" width={30} />
          </GroupItems>
          <GroupLabel>批注</GroupLabel>
        </Group>
        <Group $width={94}>
          <GroupItems $start>
            <Item icon="header" label="页眉" width={30} caret />
            <Item icon="footer" label="页脚" width={29} caret />
            <Item icon="pageNumber" label="页码" width={29} caret />
          </GroupItems>
          <GroupLabel>页眉和页脚</GroupLabel>
        </Group>
        <Group $width={200}>
          <GroupItems $start>
            <Item icon="textBox" label="文本框" width={33} caret />
            <Item icon="parts" label="文档部件" width={33} caret />
            <Item icon="wordArt" label="艺术字" width={33} caret />
            <Item icon="dropCap" label="首字下沉" width={33} caret disabled />
            <SmallStack $gap={4} $top={3}>
              <SmallButton>
                <svg width="12" height="12" viewBox="0 0 12 12">
                  <path d="M1.500 .5h6l2 2v9h-8z" fill="#fff" stroke="#8a8a8a" />
                  <path d="M4 9l7-7" stroke="#3b76ad" strokeWidth="2" />
                </svg>
                签名行
                <Caret $inline />
              </SmallButton>
              <SmallButton>
                <svg width="12" height="12" viewBox="0 0 12 12">
                  <path d="M.5 1.500h8v8h-8z" fill="#fff" stroke="#8a8a8a" />
                  <path d="M2 4h5v3H2z" fill="#e5a56b" />
                  <circle cx="8.500" cy="8.500" r="3" fill="#fff" stroke="#5b87b0" />
                  <path d="M8.500 7v2H10" stroke="#666" />
                </svg>
                日期和时间
              </SmallButton>
              <SmallButton>
                <svg width="12" height="12" viewBox="0 0 12 12">
                  <path d="M.5 1.500h11v9H.5z" fill="#fff" stroke="#5b87b0" />
                  <path d="M0 1h12v3H0z" fill="#3b76ad" />
                </svg>
                对象
                <Caret $inline />
              </SmallButton>
            </SmallStack>
          </GroupItems>
          <GroupLabel>文本</GroupLabel>
        </Group>
        <Group $width={93}>
          <GroupItems $start>
            <Item icon="pi" label="公式" width={30} caret />
            <Item icon="omega" label="符号" width={29} caret />
            <Item icon="number" label="编号" width={29} />
          </GroupItems>
          <GroupLabel>符号</GroupLabel>
        </Group>
        <Collapse aria-label="折叠功能区">
          <svg width="4" height="6" viewBox="0 0 4 6" stroke="#555"><path d="M0 4.500L4 .5" /></svg>
        </Collapse>
      </Ribbon>

      <Workspace>
        <Page>
          <MarginCorner />
        </Page>
        <Watermark>
          <WatermarkLogo>
            Bai
            <svg width="54" height="58" viewBox="0 0 54 58">
              <g fill="#fafafa" stroke="#d0d0d0" strokeWidth="1.5">
                <ellipse cx="8" cy="23" rx="6.500" ry="8.500" />
                <ellipse cx="20" cy="10" rx="6.500" ry="9" />
                <ellipse cx="36" cy="11" rx="6.500" ry="9" />
                <ellipse cx="46" cy="27" rx="6.500" ry="8" />
                <path d="M27 25c6 0 9 5 13 10 6 5 10 9 8 15-3 7-13 7-21 5-8 2-18 2-21-5-2-6 2-10 8-15 4-5 7-10 13-10z" />
              </g>
              <Du x="27" y="51" textAnchor="middle">du</Du>
            </svg>
            <WatermarkCjk>经验</WatermarkCjk>
          </WatermarkLogo>
          <WatermarkUrl>jingyan.baidu.com</WatermarkUrl>
        </Watermark>
      </Workspace>

      <StatusBar>
        <StatusSide $gap={16}>
          <span>第 1 页，共 1 页</span>
          <span>0 个字</span>
          <span>中文(中国)</span>
        </StatusSide>
        <StatusSide $gap={0}>
          <ViewButton aria-label="阅读视图" />
          <ViewButton aria-label="页面视图" $active />
          <ViewButton aria-label="Web 版式视图" />
          <Zoom>100%</Zoom>
        </StatusSide>
      </StatusBar>

      <Taskbar>
        <TaskLauncher aria-label="开始菜单" $width={38}>
          <svg width="24" height="12" viewBox="0 0 24 12">
            <circle cx="12" cy="13" r="11.500" fill="#4b7096" stroke="#a9bfd3" />
            <path d="M6 6q3-2 5.500-1v6H5z" fill="#e0662f" />
            <path d="M12.500 5q3 1 6-.5v7h-6z" fill="#8fbf3f" />
          </svg>
        </TaskLauncher>
        <TaskLauncher aria-label="浏览器" $width={47}>
          <svg width="24" height="12" viewBox="0 0 24 12">
            <circle cx="12" cy="13" r="8" stroke="#58b8ec" strokeWidth="4" />
            <path d="M3 12Q12 1 20 2q2 1 0 5" stroke="#f0c93a" strokeWidth="2" />
          </svg>
        </TaskLauncher>
        <TaskButton $width={112}>
          <svg width="22" height="16" viewBox="0 0 22 16">
            <circle cx="11" cy="11" r="7.500" stroke="#2585dd" strokeWidth="5" fill="#fff" />
          </svg>
          百度经验 - 个人中心
        </TaskButton>
        <TaskButton $width={111}>
          <WordMark />
          文档1 [兼容模式] - W...
        </TaskButton>
        <TaskButton $width={110}>
          <WordMark />
          文档2 - Word
        </TaskButton>
        <Tray>
          <svg width="130" height="10" viewBox="0 0 130 10">
            <circle cx="10" cy="10" r="4" fill="#26308c" stroke="#fff" />
            <path d="M20 6.500h3v3M22 3.500h4v3h-4z" stroke="#fff" />
            <circle cx="36" cy="10" r="5" fill="#e8f3fb" />
            <circle cx="51" cy="10" r="4" fill="#1c1c1c" />
            <circle cx="65" cy="10" r="4" fill="#fff" stroke="#cf3030" strokeWidth="2" />
            <path d="M76 7h6v3h-6z" fill="#2c4566" />
            <path d="M92 10l3-4v4z" fill="#e8eef5" />
          </svg>
          <Clock>19:29</Clock>
          <ShowDesktop aria-label="显示桌面" />
        </Tray>
      </Taskbar>
    </Window>
  </>
)

export default App
